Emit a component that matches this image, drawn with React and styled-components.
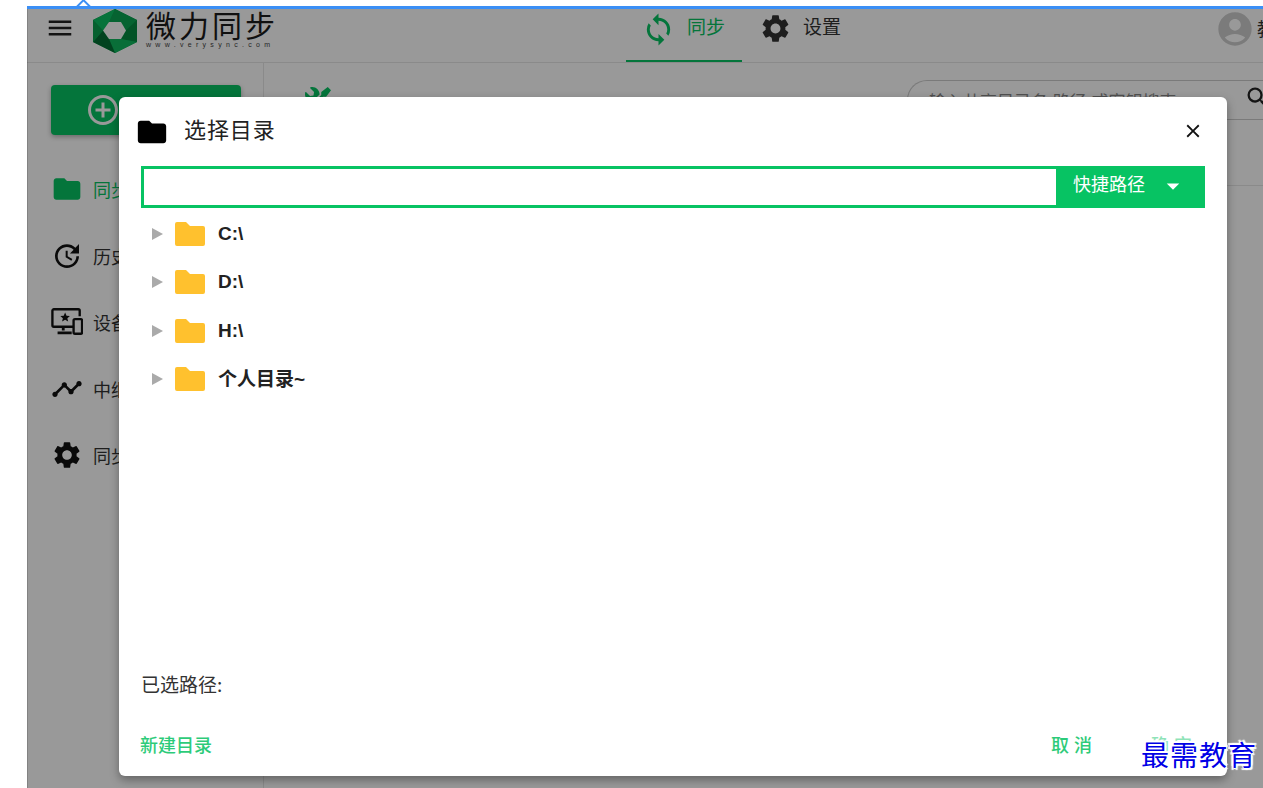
import React from 'react'
import styled, { createGlobalStyle } from 'styled-components'
import {
  MdMenu, MdSync, MdSettings, MdAccountCircle, MdAddCircleOutline, MdFolder,
  MdUpdate, MdTimeline, MdSearch, MdClose, MdArrowDropDown,
} from 'react-icons/md'
import { FaTools } from 'react-icons/fa'

const CJK = '"Noto Sans CJK SC", "Liberation Sans", sans-serif'
const GREEN = '#07c363'

const GlobalStyle = createGlobalStyle`
  html, body { margin: 0; padding: 0; background: #fff; overflow: hidden; }
  body { font-family: ${CJK}; }
`

const Page = styled.div`
  width: 1263px;
  height: 788px;
  padding-top: 6px;
  padding-left: 27px;
  box-sizing: border-box;
  position: relative;
  overflow: hidden;
`

const Pointer = styled.i`
  position: absolute;
  left: 78px;
  top: 1px;
  width: 11px;
  height: 11px;
  background: #fff;
  border: 2px solid #3b8ff5;
  box-sizing: border-box;
  transform: rotate(45deg);
`

const TopLine = styled.div`
  height: 3px;
  background: #3b8ff5;
  position: relative;
`

const Frame = styled.div`
  position: relative;
  height: 779px;
  background: #fff;
  display: flex;
  flex-direction: column;
  overflow: hidden;
`

const Header = styled.header`
  height: 53px;
  flex: none;
  display: flex;
  align-items: flex-start;
  border-bottom: 1px solid #e6e6e6;
`

const MenuBtn = styled.div`
  width: 66px;
  height: 38px;
  display: flex;
  align-items: center;
  padding-left: 18px;
  box-sizing: border-box;
  color: #222;
  font-size: 30px;
`

const LogoText = styled.div`
  margin-left: 9px;
  width: 132px;
  display: flex;
  flex-direction: column;
  color: #1c1c1c;
`

const LogoName = styled.div`
  font-size: 30px;
  font-weight: 400;
  line-height: 33px;
  letter-spacing: 3px;
  margin-top: -1px;
  white-space: nowrap;
`

const LogoUrl = styled.div`
  font-family: "Liberation Sans", sans-serif;
  font-size: 7px;
  line-height: 8px;
  letter-spacing: 4.3px;
  color: #444;
  white-space: nowrap;
`

const Nav = styled.nav`
  margin-left: 348px;
  display: flex;
  height: 53px;
`

const Tab = styled.div`
  width: ${p => p.$w}px;
  height: 53px;
  box-sizing: border-box;
  display: flex;
  align-items: flex-start;
  padding: 3px 0 0 ${p => p.$pad}px;
  gap: 11px;
  font-size: 19px;
  line-height: 28px;
  color: ${p => (p.$active ? GREEN : '#333')};
  border-bottom: 2px solid ${p => (p.$active ? GREEN : 'transparent')};
  svg { font-size: ${p => p.$icon}px; flex: none; }
`

const User = styled.div`
  margin-left: auto;
  display: flex;
  gap: 2px;
  padding-top: 2px;
  font-size: 18px;
  line-height: 34px;
  color: #333;
  width: 48px;
  flex: none;
  white-space: nowrap;
  overflow: hidden;
  svg { font-size: 40px; flex: none; margin-top: -2px; color: #cdcdcd; }
`

const Body = styled.div`
  flex: 1;
  display: flex;
  min-height: 0;
`

const Sidebar = styled.aside`
  width: 237px;
  flex: none;
  box-sizing: border-box;
  border-right: 1px solid #e6e6e6;
  padding: 22px 0 0 24px;
`

const AddButton = styled.div`
  width: 190px;
  height: 50px;
  background: ${GREEN};
  border-radius: 4px;
  box-shadow: 0 2px 5px rgba(0, 0, 0, 0.3);
  color: #fff;
  display: flex;
  align-items: center;
  padding-left: 34px;
  box-sizing: border-box;
  font-size: 36px;
`

const SideList = styled.ul`
  list-style: none;
  margin: 21px 0 0;
  padding: 0;
`

const SideItem = styled.li`
  height: 66.5px;
  display: flex;
  align-items: center;
  gap: 10px;
  font-size: 18px;
  color: ${p => (p.$active ? GREEN : '#333')};
  white-space: nowrap;
  svg { width: 32px; height: 32px; flex: none; color: ${p => (p.$active ? GREEN : '#111')}; }
`

const Main = styled.main`
  flex: 1;
  min-width: 0;
  display: flex;
  flex-direction: column;
`

const MainBar = styled.div`
  height: 123px;
  flex: none;
  box-sizing: border-box;
  border-bottom: 1px solid #e6e6e6;
  display: flex;
  align-items: flex-start;
  padding: 17px 0 0 41px;
`

const ToolsIcon = styled(FaTools)`
  font-size: 26px;
  color: ${GREEN};
  margin-top: 7px;
  flex: none;
  transform: scaleX(-1);
`

const Search = styled.div`
  margin-left: 576px;
  width: 400px;
  height: 40px;
  flex: none;
  box-sizing: border-box;
  border: 1px solid #ccc;
  border-right: 0;
  border-radius: 20px 0 0 20px;
  display: flex;
  align-items: center;
  padding-left: 21px;
  font-size: 17px;
  color: #888;
  white-space: nowrap;
  svg { margin: -4px 0 0 68px; font-size: 28px; color: #222; flex: none; }
`

const Overlay = styled.div`
  position: absolute;
  inset: 0;
  background: rgba(0, 0, 0, 0.4);
  box-shadow: inset 1px 0 rgba(0, 0, 0, 0.15);
  padding: 88px 0 0 92px;
`

const Dialog = styled.section`
  width: 1108px;
  height: 679px;
  background: #fff;
  border-radius: 6px;
  box-shadow: 0 4px 10px rgba(0, 0, 0, 0.35);
  display: flex;
  flex-direction: column;
  padding: 0 22px;
  box-sizing: border-box;
`

const DialogHead = styled.div`
  height: 69px;
  flex: none;
  display: flex;
  align-items: center;
  margin-left: -6px;
  color: #222;
  svg { font-size: 34px; color: #000; flex: none; margin-right: 15px; }
`

const DialogTitle = styled.h2`
  margin: -7px 0 0;
  font-size: 22px;
  font-weight: 400;
  letter-spacing: 0.9px;
`

const CloseBtn = styled(MdClose)`
  && { margin: -2px 1px 0 auto; font-size: 22px; color: #111; }
`

const PathBar = styled.div`
  height: 42px;
  flex: none;
  display: flex;
`

const PathInput = styled.div`
  flex: 1;
  box-sizing: border-box;
  border: 3px solid ${GREEN};
  border-right: 0;
`

const QuickPath = styled.div`
  width: 149px;
  flex: none;
  background: ${GREEN};
  color: #fff;
  display: flex;
  align-items: center;
  padding-left: 17px;
  box-sizing: border-box;
  svg { font-size: 30px; margin: -2px 0 0 13px; flex: none; }
`

const QuickLabel = styled.span`
  font-size: 18px;
  margin-top: -9px;
`

const Tree = styled.ul`
  list-style: none;
  margin: 1.5px 0 0;
  padding: 0 0 0 11px;
  flex: 1;
`

const TreeRow = styled.li`
  height: 48.5px;
  display: flex;
  align-items: center;
  font-family: "Liberation Sans", ${CJK};
  font-weight: 700;
  font-size: 19px;
  color: #222;
`

const TreeLabel = styled.span`
  margin-top: ${p => (p.$cjk ? '-4px' : '0')};
`

const Caret = styled.i`
  width: 0;
  height: 0;
  border-left: 11px solid #aaa;
  border-top: 6.5px solid transparent;
  border-bottom: 6.5px solid transparent;
  flex: none;
  margin-right: 12px;
`

const FolderIcon = styled.svg`
  width: 30px;
  height: 24px;
  flex: none;
  margin-right: 13px;
`

const Selected = styled.div`
  flex: none;
  font-size: 19px;
  line-height: 26px;
  color: #333;
  margin-bottom: 33px;
`

const DialogFoot = styled.div`
  flex: none;
  height: 44px;
  display: flex;
  align-items: flex-start;
  margin-bottom: 2px;
`

const TextBtn = styled.div`
  font-size: 18px;
  line-height: 28px;
  font-weight: 500;
  color: ${GREEN};
  opacity: ${p => (p.$faded ? 0.45 : 0.85)};
  letter-spacing: ${p => (p.$spaced ? '5px' : '0')};
  margin-left: ${p => p.$left || 0};
  white-space: nowrap;
`

const FootEnd = styled.span`
  width: 8px;
  flex: none;
`

const Watermark = styled.div`
  position: absolute;
  left: 1141px;
  top: 738px;
  font-family: "Liberation Serif", "Noto Sans CJK SC", serif;
  font-size: 28px;
  line-height: 38px;
  letter-spacing: 1px;
  color: #0000e6;
  white-space: nowrap;
  text-shadow: 1px 0 #fff, -1px 0 #fff, 0 1px #fff, 0 -1px #fff, 2px 2px 1px #fff, -2px -2px 1px #fff, 2px -2px 1px #fff, -2px 2px 1px #fff;
`

const Logo = () => (
  <svg width="44" height="44" viewBox="0 0 44 44" style={{ flex: 'none' }}>
    <polygon points="22,0 44,11 44,33 22,44 0,33 0,11" fill="#07a04e" />
    <polygon points="22,0 44,11 33,21.500 28,13 16,13" fill="#0aa552" />
    <polygon points="22,0 16,13 10,21.500 0,11" fill="#0cc063" />
    <polygon points="44,11 44,33 28,30 33,21.500" fill="#058a42" />
    <polygon points="44,33 22,44 16,30 28,30" fill="#0fb85e" />
    <polygon points="0,33 10,21.500 16,30 22,44" fill="#046f34" />
    <polygon points="0,11 10,21.500 0,33" fill="#0ba04f" />
    <polygon points="10,21.500 16,13 28,13 33,21.500 28,30 16,30" fill="#fff" />
  </svg>
)

const DevicesIcon = () => (
  <svg viewBox="0 0 34 30" fill="none" stroke="currentColor" strokeWidth="2.5">
    <path d="M24 20H3a1.5 1.5 0 0 1-1.5-1.5V3A1.5 1.5 0 0 1 3 1.5h26A1.5 1.5 0 0 1 30.500 3v6" />
    <rect x="24" y="12" width="9" height="15.500" rx="1.500" />
    <path d="M13 20v4M7 26.500h15" strokeWidth="3" />
    <path d="M15 5l1.500 3.400 3.600.3-2.700 2.400.8 3.500-3.200-1.900-3.200 1.900.8-3.500-2.700-2.400 3.600-.3z" fill="currentColor" stroke="none" />
  </svg>
)

const Folder = () => (
  <FolderIcon viewBox="0 0 30 24">
    <path d="M2 0h9l4 4h13a2 2 0 0 1 2 2v16a2 2 0 0 1-2 2H2a2 2 0 0 1-2-2V2a2 2 0 0 1 2-2z" fill="#ffc12e" />
  </FolderIcon>
)

const drives = [
  { label: 'C:\\' },
  { label: 'D:\\' },
  { label: 'H:\\' },
  { label: '个人目录~', cjk: true },
]

const sideItems = [
  { label: '同步文件夹', icon: <MdFolder />, active: true },
  { label: '历史版本', icon: <MdUpdate /> },
  { label: '设备管理', icon: <DevicesIcon /> },
  { label: '中继服务器', icon: <MdTimeline /> },
  { label: '同步设置', icon: <MdSettings /> },
]

export default function App() {
  return (
    <Page>
      <GlobalStyle />
      <Pointer />
      <TopLine />
      <Frame>
        <Header>
          <MenuBtn><MdMenu /></MenuBtn>
          <Logo />
          <LogoText>
            <LogoName>微力同步</LogoName>
            <LogoUrl>www.verysync.com</LogoUrl>
          </LogoText>
          <Nav>
            <Tab $w={116} $pad={15} $icon={35} $active><MdSync />同步</Tab>
            <Tab $w={120} $pad={17} $icon={33}><MdSettings />设置</Tab>
          </Nav>
          <User><MdAccountCircle />教育</User>
        </Header>
        <Body>
          <Sidebar>
            <AddButton><MdAddCircleOutline /></AddButton>
            <SideList>
              {sideItems.map(item => (
                <SideItem key={item.label} $active={item.active}>{item.icon}{item.label}</SideItem>
              ))}
            </SideList>
          </Sidebar>
          <Main>
            <MainBar>
              <ToolsIcon />
              <Search>输入共享目录名,路径,或密钥搜索<MdSearch /></Search>
            </MainBar>
          </Main>
        </Body>
        <Overlay>
          <Dialog>
            <DialogHead>
              <MdFolder />
              <DialogTitle>选择目录</DialogTitle>
              <CloseBtn />
            </DialogHead>
            <PathBar>
              <PathInput />
              <QuickPath><QuickLabel>快捷路径</QuickLabel><MdArrowDropDown /></QuickPath>
            </PathBar>
            <Tree>
              {drives.map(d => (
                <TreeRow key={d.label}><Caret /><Folder /><TreeLabel $cjk={d.cjk}>{d.label}</TreeLabel></TreeRow>
              ))}
            </Tree>
            <Selected>已选路径:</Selected>
            <DialogFoot>
              <TextBtn $left="-1px">新建目录</TextBtn>
              <TextBtn $spaced $left="auto">取消</TextBtn>
              <TextBtn $spaced $faded $left="54px">确定</TextBtn>
              <FootEnd />
            </DialogFoot>
          </Dialog>
        </Overlay>
      </Frame>
      <Watermark>最需教育</Watermark>
    </Page>
  )
}
